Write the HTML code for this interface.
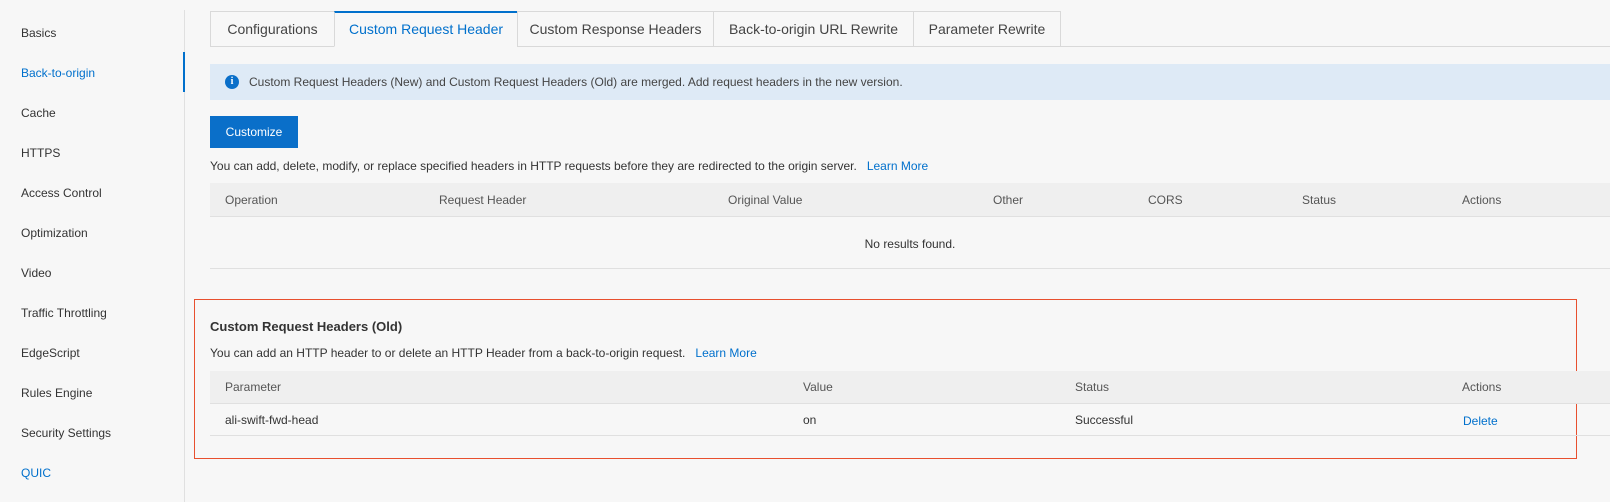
<!DOCTYPE html>
<html><head><style>
*{margin:0;padding:0;box-sizing:border-box}
body{width:1610px;height:502px;background:#f7f7f7;font-family:"Liberation Sans",sans-serif;font-size:12px;color:#333;position:relative;overflow:hidden}
.a{position:absolute;white-space:nowrap}
.side{font-size:12px;color:#333}
.tab{position:absolute;top:11px;height:36px;border:1px solid #d9d9d9;background:#f7f7f7;font-size:14px;color:#444;text-align:center;line-height:34px}
.th{background:#efefef;border-bottom:1px solid #e0e0e0}
.h{color:#555}
</style></head><body>
<div class="a" style="left:184px;top:10px;width:1px;height:492px;background:#e0e0e0"></div>
<div class="a" style="left:183px;top:52px;width:2px;height:40px;background:#0070cc"></div>
<div class="a side" style="left:21px;top:26px">Basics</div>
<div class="a side" style="left:21px;top:66px;color:#0070cc">Back-to-origin</div>
<div class="a side" style="left:21px;top:106px">Cache</div>
<div class="a side" style="left:21px;top:146px">HTTPS</div>
<div class="a side" style="left:21px;top:186px">Access Control</div>
<div class="a side" style="left:21px;top:226px">Optimization</div>
<div class="a side" style="left:21px;top:266px">Video</div>
<div class="a side" style="left:21px;top:306px">Traffic Throttling</div>
<div class="a side" style="left:21px;top:346px">EdgeScript</div>
<div class="a side" style="left:21px;top:386px">Rules Engine</div>
<div class="a side" style="left:21px;top:426px">Security Settings</div>
<div class="a side" style="left:21px;top:466px;color:#0070cc">QUIC</div>

<div class="a" style="left:210px;top:46px;width:1400px;height:1px;background:#d9d9d9"></div>
<div class="tab" style="left:210px;width:125px">Configurations</div>
<div class="tab" style="left:334px;width:184px;border-top:2px solid #0070cc;border-bottom-color:#f7f7f7;color:#0070cc;line-height:32px">Custom Request Header</div>
<div class="tab" style="left:517px;width:197px">Custom Response Headers</div>
<div class="tab" style="left:713px;width:201px">Back-to-origin URL Rewrite</div>
<div class="tab" style="left:913px;width:148px">Parameter Rewrite</div>

<div class="a" style="left:210px;top:64px;width:1400px;height:36px;background:#deeaf6"></div>
<div class="a" style="left:225px;top:75px;width:14px;height:14px;border-radius:50%;background:#0a6fc9;color:#fff;font-size:10px;font-weight:bold;text-align:center;line-height:14px;font-family:'Liberation Serif',serif">i</div>
<div class="a" style="left:249px;top:75px;color:#444">Custom Request Headers (New) and Custom Request Headers (Old) are merged. Add request headers in the new version.</div>

<div class="a" style="left:210px;top:116px;width:88px;height:32px;background:#0a6fc9;color:#fff;text-align:center;line-height:32px">Customize</div>
<div class="a" style="left:210px;top:159px">You can add, delete, modify, or replace specified headers in HTTP requests before they are redirected to the origin server. &nbsp; <span style="color:#0070cc">Learn More</span></div>

<div class="a th" style="left:210px;top:183px;width:1400px;height:34px"></div>
<div class="a h" style="left:225px;top:193px">Operation</div>
<div class="a h" style="left:439px;top:193px">Request Header</div>
<div class="a h" style="left:728px;top:193px">Original Value</div>
<div class="a h" style="left:993px;top:193px">Other</div>
<div class="a h" style="left:1148px;top:193px">CORS</div>
<div class="a h" style="left:1302px;top:193px">Status</div>
<div class="a h" style="left:1462px;top:193px">Actions</div>
<div class="a" style="left:210px;top:237px;width:1400px;text-align:center">No results found.</div>
<div class="a" style="left:210px;top:268px;width:1400px;height:1px;background:#e0e0e0"></div>

<div class="a" style="left:194px;top:299px;width:1383px;height:160px;border:1px solid #e8502f"></div>
<div class="a" style="left:210px;top:319px;font-size:13px;font-weight:bold;color:#333">Custom Request Headers (Old)</div>
<div class="a" style="left:210px;top:346px">You can add an HTTP header to or delete an HTTP Header from a back-to-origin request. &nbsp; <span style="color:#0070cc">Learn More</span></div>
<div class="a th" style="left:210px;top:371px;width:1400px;height:33px"></div>
<div class="a h" style="left:225px;top:380px">Parameter</div>
<div class="a h" style="left:803px;top:380px">Value</div>
<div class="a h" style="left:1075px;top:380px">Status</div>
<div class="a h" style="left:1462px;top:380px">Actions</div>
<div class="a" style="left:225px;top:413px">ali-swift-fwd-head</div>
<div class="a" style="left:803px;top:413px">on</div>
<div class="a" style="left:1075px;top:413px">Successful</div>
<div class="a" style="left:1463px;top:414px;color:#0070cc">Delete</div>
<div class="a" style="left:210px;top:435px;width:1400px;height:1px;background:#e0e0e0"></div>
</body></html>
